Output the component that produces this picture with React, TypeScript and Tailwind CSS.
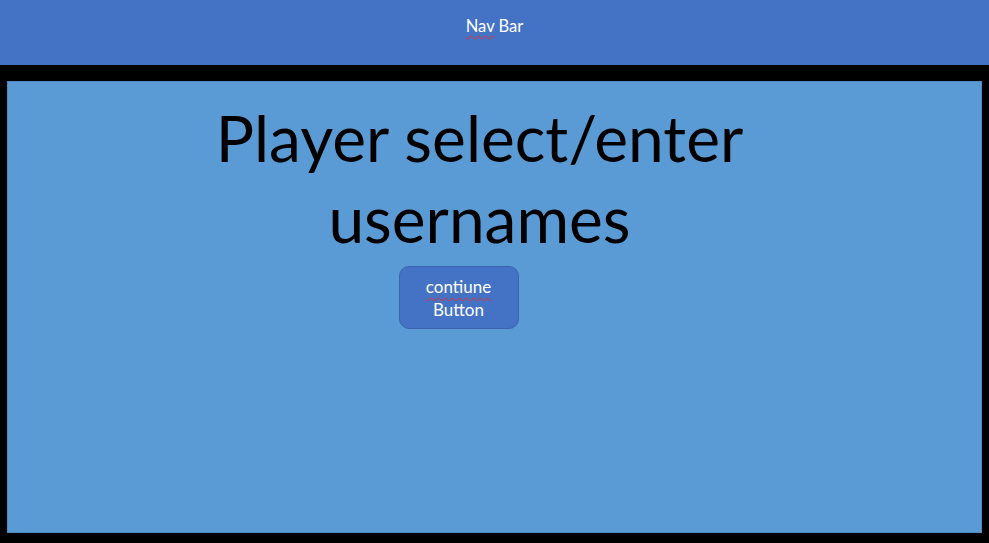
export default function App() {
  return (
    <div className="flex h-[543px] w-[989px] flex-col bg-black font-['Lato','Open_Sans',sans-serif]">
      <div className="flex h-[65px] items-start justify-center bg-[#4472c4] pt-[14px] text-[16.5px] text-white">
        <span>
          <span className="underline decoration-[#e0303a] decoration-wavy decoration-1 underline-offset-[3px]">Nav</span> Bar
        </span>
      </div>
      <div className="mx-[7px] mt-[16px] flex h-[452px] flex-col items-center border border-[#4f8ac0] bg-[#5b9bd5] pr-[30px]">
        <h1 className="mt-[15px] text-center text-[64px] leading-[81px] text-black">
          Player select/enter
          <br />
          usernames
        </h1>
        <button className="mr-[42px] mt-[7px] flex h-[63px] w-[120px] flex-col items-center justify-center rounded-[10px] border border-[#3a64ad] bg-[#4472c4] text-[17px] leading-[23px] text-white">
          <span className="underline decoration-[#e0303a] decoration-wavy decoration-1 underline-offset-[4px]">contiune</span>
          <span>Button</span>
        </button>
      </div>
    </div>
  );
}
